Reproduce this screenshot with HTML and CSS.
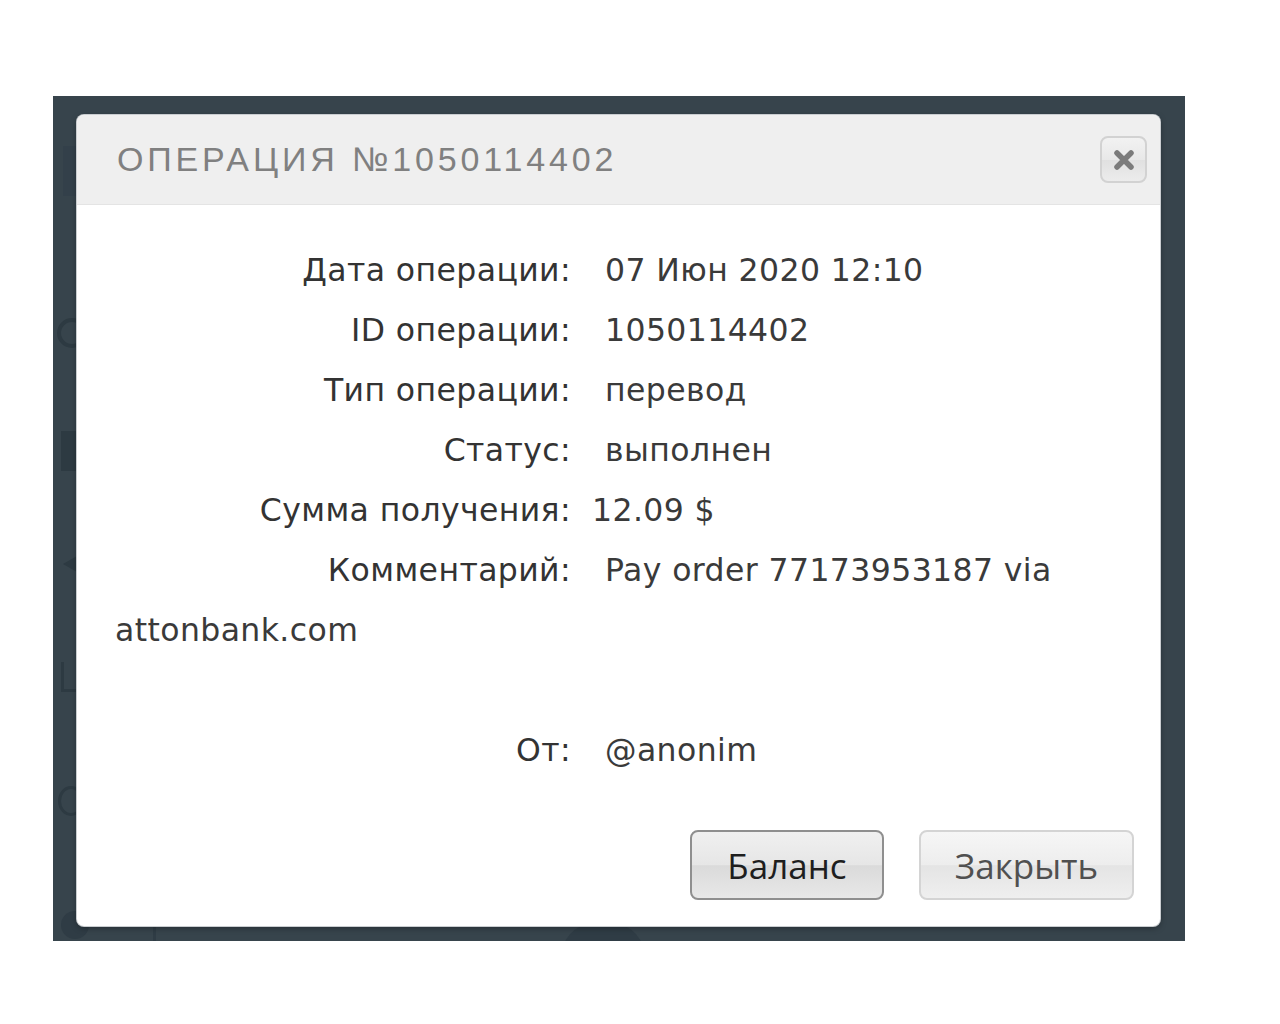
FILE: index.html
```html
<!DOCTYPE html>
<html lang="ru">
<head>
<meta charset="utf-8">
<title>Операция №1050114402</title>
<link rel="stylesheet" href="styles.css">
</head>
<body>
<div class="page">
  <div class="backdrop">
    <div class="ghost g-bar"></div>
    <div class="ghost g-dial"></div>
    <div class="ghost g-square"></div>
    <div class="ghost g-tri"></div>
    <div class="ghost g-chart"></div>
    <div class="ghost g-power"></div>
    <div class="ghost g-circ1"></div>
    <div class="ghost g-circ2"></div>
    <div class="ghost g-line"></div>

    <div class="modal">
      <div class="modal-header">
        <h2 class="modal-title">Операция №1050114402</h2>
        <button class="close-btn" type="button" aria-label="Закрыть">
          <svg width="22" height="22" viewBox="0 0 22 22">
            <path d="M4 4 L18 18 M18 4 L4 18" stroke="#7b7b7b" stroke-width="5.5" stroke-linecap="round"/>
          </svg>
        </button>
      </div>
      <div class="modal-body">
        <p class="row"><span class="label">Дата операции:</span><span class="value">07 Июн 2020 12:10</span></p>
        <p class="row"><span class="label">ID операции:</span><span class="value">1050114402</span></p>
        <p class="row"><span class="label">Тип операции:</span><span class="value">перевод</span></p>
        <p class="row"><span class="label">Статус:</span><span class="value">выполнен</span></p>
        <p class="row"><span class="label">Сумма получения:</span><span class="value value-tight">12.09 $</span></p>
        <p class="row"><span class="label">Комментарий:</span><span class="value">Pay order 77173953187 via</span></p>
        <p class="row"><span class="cont">attonbank.com</span></p>
        <p class="row empty">&nbsp;</p>
        <p class="row"><span class="label">От:</span><span class="value">@anonim</span></p>
      </div>
      <div class="modal-footer">
        <button class="btn btn-primary" type="button">Баланс</button>
        <button class="btn btn-secondary" type="button">Закрыть</button>
      </div>
    </div>
  </div>
</div>
</body>
</html>
```

FILE: styles.css
```css
* { box-sizing: border-box; }

html, body {
  margin: 0;
  padding: 0;
  background: #ffffff;
}

.page {
  width: 1280px;
  height: 1024px;
  padding: 96px 0 0 53px;
}

.backdrop {
  position: relative;
  width: 1132px;
  height: 845px;
  background: #37444c;
  padding: 19px 0 0 24px;
  overflow: hidden;
}

/* faint shapes of the dimmed page behind the dialog */
.ghost { position: absolute; }
.g-bar { left: 10px; top: 50px; width: 14px; height: 50px; background: #33404a; }
.g-dial { left: 4px; top: 222px; width: 30px; height: 30px; border: 4px solid #2d3a42; border-radius: 50%; }
.g-square { left: 8px; top: 335px; width: 20px; height: 40px; background: #2d3a42; }
.g-tri { left: 10px; top: 460px; width: 0; height: 0; border-top: 8px solid transparent; border-bottom: 8px solid transparent; border-right: 14px solid #2d3a42; }
.g-chart { left: 8px; top: 566px; width: 18px; height: 30px; border-left: 3px solid #2d3a42; border-bottom: 3px solid #2d3a42; }
.g-power { left: 5px; top: 690px; width: 26px; height: 30px; border: 3px solid #2d3a42; border-radius: 50%; }
.g-circ1 { left: 8px; top: 815px; width: 28px; height: 28px; border-radius: 50%; background: #2f3c45; }
.g-circ2 { left: 510px; top: 825px; width: 80px; height: 60px; border-radius: 50%; background: #2f3c45; }
.g-line { left: 100px; top: 815px; width: 3px; height: 30px; background: #2f3c45; }

.modal {
  position: relative;
  z-index: 1;
  width: 1083px;
  height: 811px;
  background: #ffffff;
  border-radius: 7px;
  box-shadow: 0 0 0 1px #c9cdd0, 0 2px 6px rgba(0,0,0,0.35);
  display: flex;
  flex-direction: column;
  overflow: hidden;
}

.modal-header {
  height: 90px;
  background: #efefef;
  border-bottom: 1px solid #e4e4e4;
  display: flex;
  align-items: center;
  justify-content: space-between;
  padding: 0 13px 0 40px;
}

.modal-title {
  margin: 0;
  font-family: "Liberation Sans", Arial, sans-serif;
  font-weight: normal;
  font-size: 34px;
  letter-spacing: 3.85px;
  text-transform: uppercase;
  color: #808080;
}

.close-btn {
  width: 47px;
  height: 47px;
  padding: 0;
  border: 2px solid #d2d2d2;
  border-radius: 8px;
  background: linear-gradient(#f2f2f2, #e8e8e8 50%, #e0e0e0 51%, #ececec);
  display: flex;
  align-items: center;
  justify-content: center;
}

.modal-body {
  flex: 1;
  padding: 35px 38px 0 38px;
  font-family: "DejaVu Sans", "Noto Sans", sans-serif;
  font-size: 31.5px;
  letter-spacing: 0.4px;
  color: #3a3a3a;
}

.row {
  margin: 0;
  line-height: 60px;
}

.label {
  display: inline-block;
  width: 456px;
  text-align: right;
  color: #333333;
}

.value { margin-left: 34px; }
.value-tight { margin-left: 21px; }

.modal-footer {
  display: flex;
  justify-content: flex-end;
  gap: 35px;
  padding: 0 26px 26px 0;
}

.btn {
  height: 70px;
  border-radius: 8px;
  font-family: "Open Sans", "Noto Sans", sans-serif;
  font-size: 35px;
  padding: 0;
}

.btn-primary {
  width: 194px;
  border: 2px solid #8f8f8f;
  background: linear-gradient(#f0f0f0, #e6e6e6 50%, #dadada 51%, #e8e8e8);
  color: #1e1e1e;
}

.btn-secondary {
  width: 215px;
  border: 2px solid #d4d4d4;
  background: linear-gradient(#f6f6f6, #ededed 50%, #e4e4e4 51%, #efefef);
  color: #505050;
}
```
